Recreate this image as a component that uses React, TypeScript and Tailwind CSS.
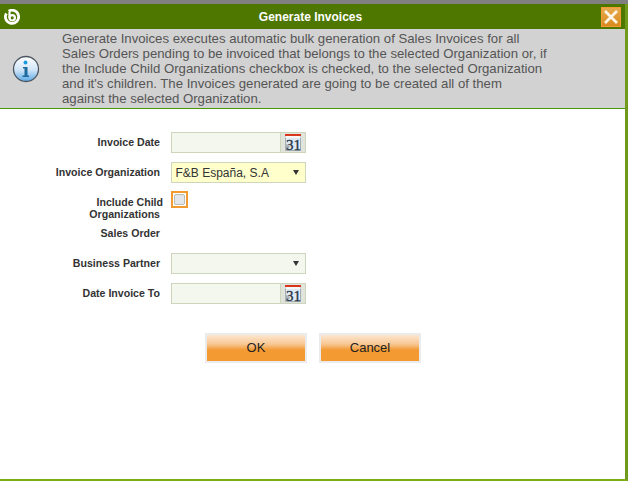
import React from 'react';

function CalendarIcon() {
  return (
    <svg width="16" height="17" viewBox="0 0 16 17">
      <rect x="0.5" y="1" width="15" height="15.5" fill="#dfe9f3" stroke="#8494a6" strokeWidth="0.7" />
      <rect x="0" y="0" width="16" height="2" fill="#d9361e" />
      <rect x="0.5" y="2" width="15" height="2" fill="#f7f7f7" />
      <path d="M0 9 L5 12 L3 17 L0 17 Z" fill="#aab2ba" />
      <text x="8.5" y="15.5" textAnchor="middle" fontFamily="'Liberation Serif', serif" fontSize="15" stroke="#26323f" strokeWidth="0.3" fill="#26323f">31</text>
    </svg>
  );
}

function DateField() {
  return (
    <div className="flex h-[21px] w-[135px] border border-[#cdd5bd] bg-[#f4f7ee]">
      <div className="flex-1" />
      <div className="flex w-[25px] items-center justify-center border-l border-[#cdd5bd] bg-[#e1e4da]">
        <CalendarIcon />
      </div>
    </div>
  );
}

function SelectField({ value, bg }: { value?: string; bg: string }) {
  return (
    <div className={`flex h-[21px] w-[135px] items-center justify-between border border-[#cdd5bd] pl-[3.5px] pr-[6px] text-[12px] text-[#333333] ${bg}`}>
      <span>{value}</span>
      <svg width="6" height="5" viewBox="0 0 6 5" className="mb-[1px] ml-auto">
        <path d="M0 0 H6 L3 5 Z" fill="#333333" />
      </svg>
    </div>
  );
}

function Label({ children, className = '' }: { children: React.ReactNode; className?: string }) {
  return <div className={`text-right text-[10.6px] font-bold leading-[12px] text-[#333333] ${className}`}>{children}</div>;
}

function ActionButton({ label }: { label: string }) {
  return (
    <button className="h-[30px] w-[102px] border-2 border-[#ebebeb] bg-[linear-gradient(#fce6cf_0%,#f8c793_35%,#f39a32_58%,#f39a32_100%)] text-[13px] text-[#222222]">
      {label}
    </button>
  );
}

export default function App() {
  return (
    <div className="flex h-[481px] w-[628px] flex-col bg-white font-['Liberation_Sans',Arial,sans-serif]">
      <div className="h-[4px] bg-[#808080]" />
      <div className="flex flex-1 flex-col border-b-2 border-r-[3px] border-b-[#7cae16] border-r-[#6f9a1c]">
        {/* title bar */}
        <div className="flex h-[25px] items-center justify-between bg-[#4e7700] pl-1 pr-[4px]">
          <svg width="16" height="16" viewBox="0 0 16 16">
            <path d="M4.6 2.2 A6.6 6.6 0 1 1 2.4 4.4" fill="none" stroke="#ffffff" strokeWidth="2.8" />
            <circle cx="8.2" cy="8.8" r="2.7" fill="none" stroke="#ffffff" strokeWidth="2.2" />
            <path d="M5.5 3 V9" stroke="#ffffff" strokeWidth="2.2" />
          </svg>
          <div className="text-[12px] font-bold text-white">Generate Invoices</div>
          <div className="flex h-[20px] w-[20px] items-center justify-center border border-[#f39a32] bg-[linear-gradient(#e8a94e,#d98a1e)]">
            <svg width="16" height="16" viewBox="0 0 16 16">
              <path d="M2 2 L14 14 M14 2 L2 14" stroke="#fff6e6" strokeWidth="2.8" />
            </svg>
          </div>
        </div>

        {/* message */}
        <div className="flex h-[80px] items-center border-b border-[#4a9a08] bg-[#d2d2d2]">
          <div className="flex w-[51px] justify-center">
            <svg width="28" height="28" viewBox="0 0 28 28">
              <defs>
                <linearGradient id="info" x1="0" y1="0" x2="0" y2="1">
                  <stop offset="0" stopColor="#ffffff" />
                  <stop offset="0.55" stopColor="#cfe4f7" />
                  <stop offset="1" stopColor="#5aa8e6" />
                </linearGradient>
              </defs>
              <circle cx="14" cy="14" r="12.5" fill="url(#info)" stroke="#4d5660" strokeWidth="1.3" />
              <circle cx="13.5" cy="7.5" r="2" fill="#1e9be0" />
              <path d="M11 12 H15.5 V20.5 H17 V22 H10.5 V20.5 H12.5 V13.5 H11 Z" fill="#1f6a9c" />
            </svg>
          </div>
          <div className="ml-[11px] w-[520px] text-[13.2px] leading-[15px] text-[#555555]">
            Generate Invoices executes automatic bulk generation of Sales Invoices for all
            <br />
            Sales Orders pending to be invoiced that belongs to the selected Organization or, if
            <br />
            the Include Child Organizations checkbox is checked, to the selected Organization
            <br />
            and it's children. The Invoices generated are going to be created all of them
            <br />
            against the selected Organization.
          </div>
        </div>

        {/* form */}
        <div className="grid grid-cols-[160px_135px] items-center gap-x-[11px] pt-[23px]">
          <Label className="pb-[2px]">Invoice Date</Label>
          <DateField />
          <Label className="mt-[9px] pb-[2px]">Invoice Organization</Label>
          <div className="mt-[9px]">
            <SelectField value="F&B España, S.A" bg="bg-[#ffffcc]" />
          </div>
          <Label className="mt-[13px] self-start">
            <span className="-mr-[3px] inline-block">Include Child</span>
            <br />
            Organizations
          </Label>
          <div className="mt-[8px] h-[17px] w-[17px] self-start border-2 border-[#f39a32] bg-white p-[1px]">
            <div className="h-full w-full rounded-[2px] border border-[#b9bdb4] bg-[#e3e6ea]" />
          </div>
          <Label className="mt-[7px]">Sales Order</Label>
          <div className="mt-[7px] h-[12px]" />
          <Label className="mt-[14px] pb-[2px]">Business Partner</Label>
          <div className="mt-[14px]">
            <SelectField bg="bg-[#f4f7ee]" />
          </div>
          <Label className="mt-[9px] pb-[2px]">Date Invoice To</Label>
          <div className="mt-[9px]">
            <DateField />
          </div>
        </div>

        {/* actions */}
        <div className="flex gap-[12px] pl-[205px] pt-[29px]">
          <ActionButton label="OK" />
          <ActionButton label="Cancel" />
        </div>
      </div>
    </div>
  );
}
